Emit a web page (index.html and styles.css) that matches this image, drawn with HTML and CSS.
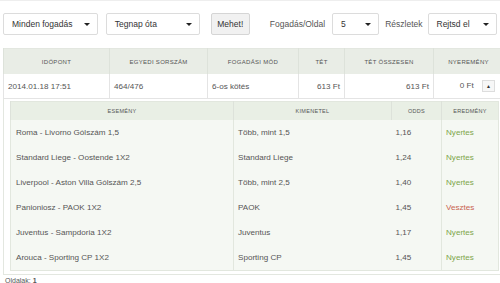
FILE: index.html
```html
<!DOCTYPE html>
<html lang="hu">
<head>
  <meta charset="UTF-8">
  <title>Fogadásaim</title>
  <link rel="stylesheet" href="styles.css">
</head>
<body>

  <!-- Szűrők -->
  <div class="filters">
    <div class="select sel-type">Minden fogadás<span class="caret"></span></div>
    <div class="select sel-date">Tegnap óta<span class="caret"></span></div>
    <button class="btn-go">Mehet!</button>
    <span class="label lbl-per">Fogadás/Oldal</span>
    <div class="select sel-per">5<span class="caret"></span></div>
    <span class="label lbl-det">Részletek</span>
    <div class="select sel-det">Rejtsd el<span class="caret"></span></div>
  </div>

  <!-- Fogadások -->
  <table class="bets">
    <thead>
      <tr>
        <th class="c-time">Időpont</th>
        <th class="c-id">Egyedi sorszám</th>
        <th class="c-mode">Fogadási mód</th>
        <th class="c-stake">Tét</th>
        <th class="c-total">Tét összesen</th>
        <th class="c-win">Nyeremény</th>
      </tr>
    </thead>
    <tbody>
      <tr class="bet-row">
        <td>2014.01.18 17:51</td>
        <td>464/476</td>
        <td>6-os kötés</td>
        <td class="num">613 Ft</td>
        <td class="num">613 Ft</td>
        <td class="num last">0 Ft <span class="toggle">&#9650;</span></td>
      </tr>
      <tr class="detail-row">
        <td colspan="6">
          <table class="events">
            <thead>
              <tr>
                <th class="e-name">Esemény</th>
                <th class="e-out">Kimenetel</th>
                <th class="e-odds">Odds</th>
                <th class="e-res">Eredmény</th>
              </tr>
            </thead>
            <tbody>
              <tr><td>Roma - Livorno Gólszám 1,5</td><td>Több, mint 1,5</td><td>1,16</td><td class="win">Nyertes</td></tr>
              <tr><td>Standard Liege - Oostende 1X2</td><td>Standard Liege</td><td>1,24</td><td class="win">Nyertes</td></tr>
              <tr><td>Liverpool - Aston Villa Gólszám 2,5</td><td>Több, mint 2,5</td><td>1,40</td><td class="win">Nyertes</td></tr>
              <tr><td>Panioniosz - PAOK 1X2</td><td>PAOK</td><td>1,45</td><td class="lose">Vesztes</td></tr>
              <tr><td>Juventus - Sampdoria 1X2</td><td>Juventus</td><td>1,17</td><td class="win">Nyertes</td></tr>
              <tr><td>Arouca - Sporting CP 1X2</td><td>Sporting CP</td><td>1,45</td><td class="win">Nyertes</td></tr>
            </tbody>
          </table>
        </td>
      </tr>
    </tbody>
  </table>

  <div class="pages">Oldalak: <strong>1</strong></div>

</body>
</html>
```

FILE: styles.css
```css
body {
  margin: 0;
  padding: 0 3px;
  background: #ffffff;
  font-family: "Liberation Sans", Arial, sans-serif;
  color: #444;
  border-top: 1px solid #eeeeee;
}

.filters {
  display: flex;
  align-items: center;
  height: 22px;
  margin-top: 12px;
  font-size: 8.5px;
  color: #333;
}

.select {
  position: relative;
  box-sizing: border-box;
  height: 22px;
  line-height: 20px;
  padding-left: 8px;
  border: 1px solid #dcdcdc;
  border-radius: 2px;
  background: #fff;
}

.caret {
  position: absolute;
  right: 7px;
  top: 9px;
  width: 0;
  height: 0;
  border-left: 3px solid transparent;
  border-right: 3px solid transparent;
  border-top: 3px solid #222;
}

.sel-type { width: 97px; }
.sel-date { width: 96px; margin-left: 8px; }
.sel-per  { width: 48px; }
.sel-det  { width: 71px; margin-left: 5px; }

.btn-go {
  box-sizing: border-box;
  width: 40px;
  height: 22px;
  margin-left: 11px;
  padding: 0;
  border: 1px solid #d5d5d5;
  border-radius: 2px;
  background: #f1f1f1;
  color: #333;
  font-family: inherit;
  font-size: 8.5px;
}

.label { color: #555; }
.lbl-per { margin-left: 20px; margin-right: 7px; }
.lbl-det { margin-left: 6px; }

/* fő táblázat */
.bets {
  width: 494px;
  margin-top: 13px;
  border-collapse: collapse;
  table-layout: fixed;
  border: 1px solid #e3e7e0;
}

.bets th {
  height: 25px;
  padding: 0;
  background: #e9ede6;
  border-left: 1px solid #dde2da;
  color: #555;
  font-size: 6px;
  font-weight: normal;
  letter-spacing: 0.3px;
  text-transform: uppercase;
  text-align: center;
}

.c-time  { width: 105px; }
.c-id    { width: 97px; }
.c-mode  { width: 90px; }
.c-stake { width: 45px; }
.c-total { width: 88px; }
.c-win   { width: 69px; }

.bet-row td {
  height: 24px;
  padding: 0 4px;
  border-left: 1px solid #e4e4e4;
  border-bottom: 1px solid #e4e4e4;
  font-size: 8.1px;
  color: #555;
  white-space: nowrap;
}

.bet-row td.num { text-align: right; }
.bet-row td.last { padding-right: 8px; }

.toggle {
  display: inline-block;
  box-sizing: border-box;
  width: 13px;
  height: 12px;
  margin-left: 6px;
  border: 1px solid #ddd;
  background: #f7f7f7;
  font-size: 5px;
  line-height: 10px;
  text-align: center;
  vertical-align: middle;
  color: #333;
}

.detail-row > td {
  padding: 2px 2px 3px 6px;
}

/* események */
.events {
  width: 484px;
  border-collapse: collapse;
  table-layout: fixed;
  border: 1px solid #e2e7de;
  background: #f5f8f3;
}

.events th {
  height: 18px;
  padding: 0;
  background: #e9efe5;
  color: #555;
  font-size: 5.5px;
  font-weight: normal;
  letter-spacing: 0.3px;
  text-transform: uppercase;
  text-align: center;
}

.e-name { width: 222px; }
.e-out  { width: 157px; }
.e-odds { width: 49px; }
.e-res  { width: 56px; }

.events td {
  height: 25px;
  padding: 0 0 0 4px;
  font-size: 8.1px;
  color: #555;
  white-space: nowrap;
}

.events td:first-child { padding-left: 5px; }

.events td:nth-child(2),
.events td:nth-child(4) {
  border-left: 1px solid #e2e7de;
}

.events .win  { color: #7ea64a; }
.events .lose { color: #c9634f; }

.pages {
  margin-top: 2px;
  padding-left: 2px;
  font-size: 7px;
  color: #555;
}
```
